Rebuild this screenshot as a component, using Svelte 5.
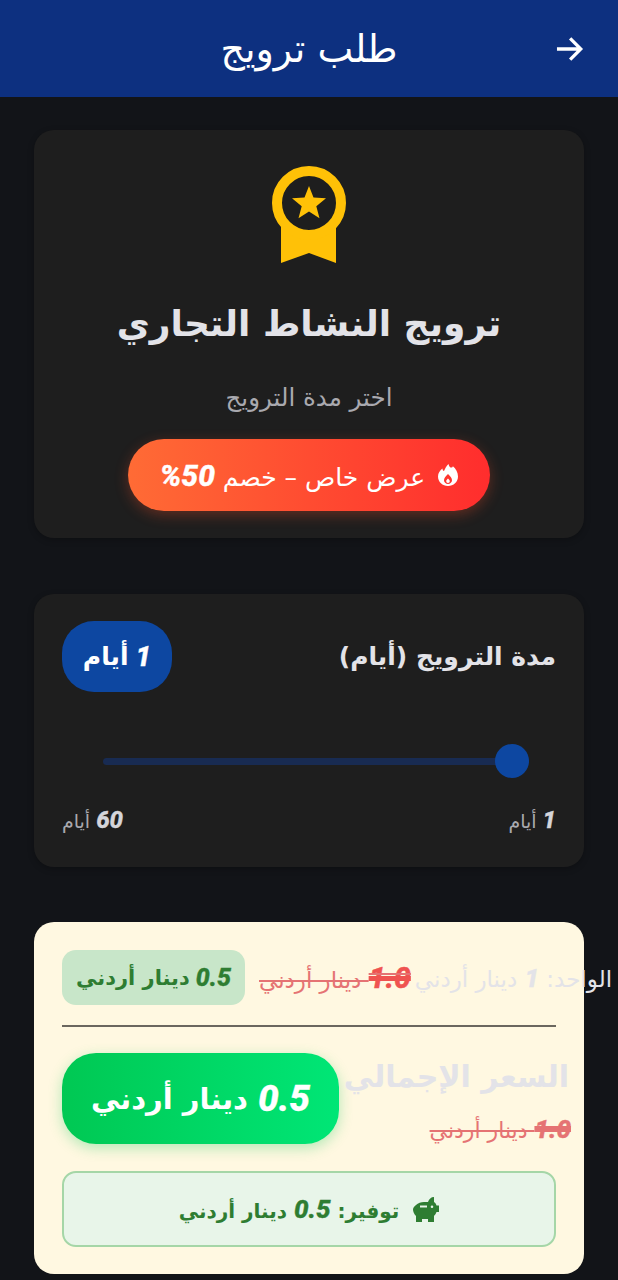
<script>
  let days = $state(1)
  const unit = 'دينار أردني'
</script>

<div class="page" dir="rtl">
  <header class="topbar">
    <h1>طلب ترويج</h1>
    <button class="back" aria-label="رجوع">
      <svg viewBox="0 0 24 24" width="34" height="34" fill="none" stroke="#fff" stroke-width="2.3">
        <path d="M3.500 12H20M12.800 4.500 20.300 12l-7.500 7.500" />
      </svg>
    </button>
  </header>

  <main class="content">
    <section class="card intro">
      <svg class="medal" viewBox="0 0 74 97" width="74" height="97">
        <path d="M9 55V97L37 87 64 97V55Z" fill="#ffc107" />
        <circle cx="37" cy="37" r="32" fill="#1e1e1e" stroke="#ffc107" stroke-width="10" />
        <path d="M37 20l4.500 11.500 12.500.8-9.700 7.900 3.200 12.100L37 45.600l-10.500 6.700 3.200-12.100-9.700-7.900 12.500-.8Z" fill="#ffc107" />
      </svg>
      <h2>ترويج النشاط التجاري</h2>
      <p class="sub">اختر مدة الترويج</p>
      <div class="offer">
        <svg viewBox="0 0 20 22" width="20" height="22" fill="#fff">
          <path fill-rule="evenodd" d="M10.500 0c.5 2.500 1.800 3.800 3.200 3.600.5-.1 1-.6 1.200-1.300C17.800 4.800 20 8.500 20 12.500 20 18 15.500 22 10 22S0 18 0 12.500C0 9 2 6.500 4.500 4.500c0 1.300.6 2.300 1.500 2.500C7 4.800 8.500 1.800 10.500 0ZM10 10c-2.500 2.200-4 4.300-4 6.300 0 2 1.800 3.700 4 3.700s4-1.700 4-3.700c0-2-1.500-4.100-4-6.300Z" />
          <path d="M10 14.500c1.100 1 1.800 1.900 1.800 2.700a1.800 1.800 0 0 1-3.600 0c0-.8.7-1.700 1.800-2.700Z" />
        </svg>
        <span>عرض خاص – خصم <b>50%</b></span>
      </div>
    </section>

    <section class="card duration">
      <div class="duration-head">
        <h3>مدة الترويج (أيام)</h3>
        <span class="days-pill"><b>{days}</b> أيام</span>
      </div>
      <div class="slider">
        <span class="thumb"></span>
      </div>
      <div class="range-labels">
        <span><b>1</b> أيام</span>
        <span><b>60</b> أيام</span>
      </div>
    </section>

    <section class="price-card">
      <div class="unit-row" dir="ltr">
        <span class="new-small" dir="rtl"><b>0.5</b> {unit}</span>
        <s class="old-small" dir="rtl"><b>1.0</b> {unit}</s>
        <span class="unit-label" dir="rtl">الواحد: <b>1</b> {unit}</span>
      </div>
      <hr />
      <div class="total-row" dir="ltr">
        <div class="total-pill" dir="rtl"><b>0.5</b> {unit}</div>
        <div class="total-side" dir="rtl">
          <div class="total-label">السعر الإجمالي</div>
          <s class="old-total"><b>1.0</b> {unit}</s>
        </div>
      </div>
      <div class="saving">
        <svg viewBox="0 0 26 25" width="26" height="25" fill="#2e7d32">
          <path fill-rule="evenodd" d="M3 8C5 6 8 5 11 5h4c1-3 3-5 6-5v5c1.500 1 2 2 2.500 3.500H26V15h-2.500c-.5 2-2 3-2.500 4v6h-6v-3H9v3H3v-6c-2-2-3-4.500-3-6.500C0 11 1.500 9 3 8Zm4 .5v2h7v-2Zm12 0a1.300 1.300 0 1 0 0 2.600 1.300 1.300 0 0 0 0-2.600Z" />
        </svg>
        <span>توفير: <b>0.5</b> {unit}</span>
      </div>
    </section>
  </main>
</div>

<style>
  :global(body) {
    margin: 0;
    background: #121418;
  }

  .page {
    width: 618px;
    height: 1280px;
    overflow: hidden;
    background: #121418;
    font-family: "DejaVu Sans", sans-serif;
    color: #e3e3e8;
  }

  b {
    font-family: Roboto, sans-serif;
    font-style: italic;
    font-weight: 800;
    -webkit-text-stroke: 0.4px currentColor;
  }

  .topbar {
    height: 97px;
    background: #0d3080;
    display: flex;
    align-items: center;
    justify-content: center;
    position: relative;
  }

  .topbar h1 {
    margin: 0;
    font-size: 38px;
    font-weight: 400;
    color: #fff;
    line-height: 1;
  }

  .back {
    position: absolute;
    right: 32px;
    top: 32px;
    padding: 0;
    border: none;
    background: none;
    line-height: 0;
  }

  .content {
    padding: 33px 34px 0;
    display: flex;
    flex-direction: column;
  }

  .card {
    background: #1e1e1e;
    border-radius: 20px;
    box-shadow: 0 2px 6px rgba(0, 0, 0, 0.25);
  }

  .intro {
    height: 408px;
    margin-bottom: 56px;
    box-sizing: border-box;
    padding-top: 36px;
    display: flex;
    flex-direction: column;
    align-items: center;
  }

  .medal {
    display: block;
  }

  .intro h2 {
    margin: 26px 0 0;
    font-size: 36px;
    line-height: 70px;
    font-weight: 700;
    color: #e3e3e8;
  }

  .sub {
    margin: 24px 0 0;
    font-size: 24.500px;
    line-height: 30px;
    color: #a9a9af;
  }

  .offer {
    margin-top: 26px;
    width: 362px;
    height: 72px;
    border-radius: 36px;
    background: linear-gradient(90deg, #ff6b35, #ff2d2d);
    box-shadow: 0 4px 14px rgba(255, 80, 40, 0.3);
    display: flex;
    align-items: center;
    justify-content: center;
    gap: 13px;
    color: #fff;
    font-size: 25px;
  }

  .offer b {
    font-size: 30px;
  }

  .duration {
    height: 273px;
    margin-bottom: 55px;
    box-sizing: border-box;
    padding: 27px 28px 0;
  }

  .duration-head {
    display: flex;
    align-items: center;
    justify-content: space-between;
  }

  .duration-head h3 {
    margin: 0;
    font-size: 25px;
    font-weight: 700;
    color: #e3e3e8;
  }

  .days-pill {
    width: 110px;
    height: 71px;
    border-radius: 32px;
    background: #0d47a1;
    color: #fff;
    display: flex;
    align-items: center;
    justify-content: center;
    gap: 7px;
    font-size: 25px;
    font-weight: 700;
  }

  .days-pill b {
    font-size: 28px;
  }

  .slider {
    margin: 66px 27px 0 41px;
    height: 7px;
    border-radius: 3.500px;
    background: #182b52;
    position: relative;
  }

  .thumb {
    position: absolute;
    right: 0;
    top: -14px;
    width: 34px;
    height: 34px;
    border-radius: 50%;
    background: #0d47a1;
  }

  .range-labels {
    margin-top: 41px;
    display: flex;
    justify-content: space-between;
    font-size: 19px;
    color: #a9a9af;
  }

  .range-labels b {
    font-size: 24px;
    color: #d5d5da;
  }

  .price-card {
    height: 352px;
    box-sizing: border-box;
    padding: 28px 28px 0;
    background: #fff8e1;
    border-radius: 20px;
    position: relative;
  }

  .unit-row {
    display: flex;
    align-items: center;
    gap: 14px;
    height: 55px;
    white-space: nowrap;
  }

  .new-small {
    flex: none;
    width: 183px;
    height: 55px;
    border-radius: 14px;
    background: #c8e6c9;
    color: #2e7d32;
    display: flex;
    align-items: center;
    justify-content: center;
    gap: 6px;
    font-size: 21px;
    font-weight: 700;
  }

  .new-small b {
    font-size: 25px;
  }

  .old-small {
    flex: none;
    color: #e57373;
    font-size: 23px;
    text-decoration-thickness: 2px;
  }

  .old-small b {
    font-size: 30px;
    color: #ef5350;
    text-decoration: line-through 5px;
  }

  .unit-label {
    flex: none;
    color: #e3e3e8;
    font-size: 23px;
    margin-left: -10px;
  }

  .unit-label b {
    font-size: 26px;
  }

  hr {
    margin: 20px 0 26px;
    border: none;
    height: 2px;
    background: #6b675e;
  }

  .total-row {
    display: flex;
    height: 91px;
    white-space: nowrap;
  }

  .total-pill {
    flex: none;
    width: 277px;
    height: 91px;
    border-radius: 34px;
    background: linear-gradient(90deg, #00c853, #00e676);
    box-shadow: 0 4px 14px rgba(0, 200, 83, 0.3);
    color: #fff;
    display: flex;
    align-items: center;
    justify-content: center;
    gap: 10px;
    font-size: 29px;
    font-weight: 700;
  }

  .total-pill b {
    font-size: 37px;
  }

  .total-side {
    flex: none;
    width: 232px;
    display: flex;
    flex-direction: column;
    align-items: flex-start;
  }

  .total-label {
    padding-right: 2px;
    font-size: 30px;
    line-height: 48px;
    font-weight: 700;
    color: #e3e3e8;
  }

  .old-total {
    color: #e57373;
    font-size: 22px;
    margin-top: 13px;
  }

  .old-total b {
    font-size: 26px;
    text-decoration: line-through 4px;
  }

  .saving {
    margin-top: 27px;
    height: 76px;
    box-sizing: border-box;
    border: 2px solid #a5d6a7;
    border-radius: 14px;
    background: #e8f5e9;
    color: #2e7d32;
    display: flex;
    align-items: center;
    justify-content: center;
    gap: 14px;
    font-size: 20px;
    font-weight: 700;
  }

  .saving b {
    font-size: 26px;
  }
</style>
